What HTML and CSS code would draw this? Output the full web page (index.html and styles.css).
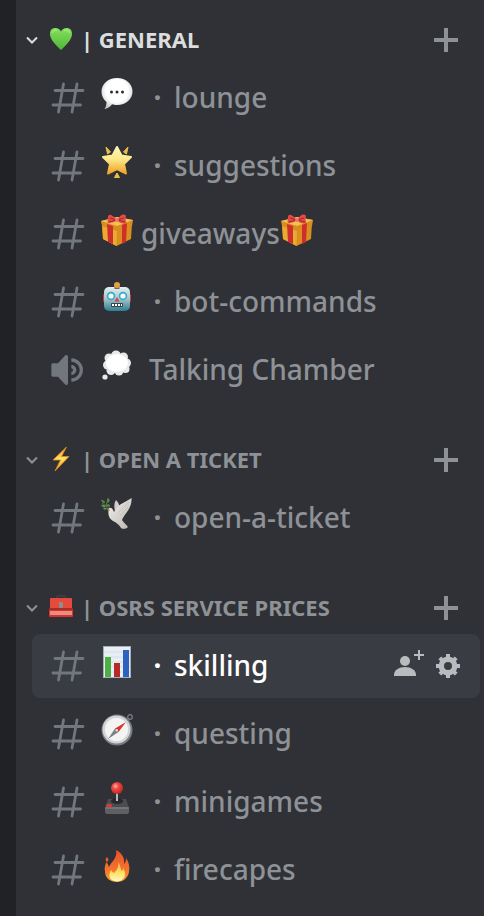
FILE: index.html
```html
<!DOCTYPE html>
<html lang="en">
<head>
<meta charset="utf-8">
<meta name="viewport" content="width=device-width, initial-scale=1">
<title>Channels</title>
<link rel="stylesheet" href="styles.css">
</head>
<body>
<svg class="defs" aria-hidden="true">
  <defs>
    <linearGradient id="gGreen" x1="0" y1="0" x2="0" y2="1"><stop offset="0" stop-color="#86e05e"/><stop offset="1" stop-color="#4fb535"/></linearGradient>
    <radialGradient id="gWhite" cx=".5" cy=".42" r=".6"><stop offset=".6" stop-color="#fff"/><stop offset="1" stop-color="#c9c9cb"/></radialGradient>
    <linearGradient id="gStar" x1="0" y1="0" x2="0" y2="1"><stop offset="0" stop-color="#fff6b8"/><stop offset=".45" stop-color="#fde98a"/><stop offset="1" stop-color="#f0a125"/></linearGradient>
    <linearGradient id="gBot" x1="0" y1="0" x2="0" y2="1"><stop offset="0" stop-color="#e3f1f0"/><stop offset=".5" stop-color="#a3c4c8"/><stop offset="1" stop-color="#2f7d92"/></linearGradient>
    <linearGradient id="gBolt" x1="0" y1="0" x2="0" y2="1"><stop offset="0" stop-color="#f39a1f"/><stop offset=".5" stop-color="#ffe266"/><stop offset="1" stop-color="#f08c18"/></linearGradient>
    <linearGradient id="gFire" x1="0" y1="0" x2="0" y2="1"><stop offset="0" stop-color="#e8502a"/><stop offset=".6" stop-color="#f5742c"/><stop offset="1" stop-color="#f9a236"/></linearGradient>
    <linearGradient id="gFlame" x1="0" y1="0" x2="0" y2="1"><stop offset="0" stop-color="#fbb03f"/><stop offset=".6" stop-color="#fee56a"/><stop offset="1" stop-color="#fff9c9"/></linearGradient>
    <linearGradient id="gDove" x1="0" y1="0" x2="1" y2="1"><stop offset="0" stop-color="#f4f2ee"/><stop offset="1" stop-color="#b9b5ae"/></linearGradient>
    <radialGradient id="gBall" cx=".38" cy=".35" r=".65"><stop offset="0" stop-color="#ffaaa2"/><stop offset=".4" stop-color="#ec4b45"/><stop offset="1" stop-color="#c52622"/></radialGradient>
    <symbol id="hash" viewBox="0 0 40 40"><path d="M7 12.500H35M5 27H32.500M15.500 6L10.500 34M29 6L24 34" fill="none" stroke="currentColor" stroke-width="2.800" stroke-linecap="round"/></symbol>
    <symbol id="chevron" viewBox="0 0 12 12"><path d="M1 3.500L6 8.500L11 3.500" fill="none" stroke="currentColor" stroke-width="2"/></symbol>
    <symbol id="plus" viewBox="0 0 24 24"><path d="M12 0V24M0 12H24" stroke="currentColor" stroke-width="4"/></symbol>
    <symbol id="gift" viewBox="-1 -1 34 34">
      <path d="M1 10L16 16L31 9L30 25L15.500 32L2 25Z" fill="#d98f1f"/>
      <path d="M1 10L16 16L15.500 32L2 25Z" fill="#e9a933"/>
      <path d="M0 7L16 3L32 6L31 12L16 17L1 12Z" fill="#d98d20"/>
      <path d="M0 7L16 3L32 6L16 12Z" fill="#f2c050"/>
      <path d="M6 10L12 12V30L7 28ZM21 11L26 9L25 28L21 30Z" fill="#cf2e2b"/>
      <path d="M16 6C10 -1 7 0 7 3C7 6 6 8 7 9C11 9 14 8 16 6C18 9 22 10 25 9C25 6 24 4 25 2C23 -1 19 1 16 6Z" fill="#e34b48"/>
      <path d="M9 4L16 6L23 4M8 8L16 6L24 8" stroke="#a92427" fill="none"/>
      <circle cx="16" cy="6" r="2" fill="#f0716b"/>
    </symbol>
  </defs>
</svg>

<nav class="sidebar" aria-label="Channels">
  <section class="category unread">
    <header class="category-head">
      <button class="toggle" type="button" aria-expanded="true">
        <svg class="chevron" aria-hidden="true"><use href="#chevron"/></svg>
        <svg class="emoji-small" viewBox="0 0 24 24" aria-hidden="true"><path d="M12 23C8 19 1 13 1 7C1 3 3 1 6.500 1C9 1 11 2.500 12 4.500C13 2.500 15 1 17.500 1C21 1 23 3 23 7C23 13 16 19 12 23Z" fill="url(#gGreen)"/><path d="M3.500 6C4 3.500 6 3 8 3.500M15 3.500C18 2.500 20 4 20.500 6" stroke="#b1f08f" stroke-width="1.500" fill="none" opacity=".6"/></svg>
        <span class="title">| GENERAL</span>
      </button>
      <button class="add" type="button" aria-label="Create channel"><svg aria-hidden="true"><use href="#plus"/></svg></button>
    </header>
    <ul class="channels">
      <li class="channel"><a href="#lounge">
        <svg class="kind" aria-hidden="true"><use href="#hash"/></svg>
        <svg class="emoji" viewBox="-1 -1 34 34" aria-hidden="true"><path d="M16 0C25 0 31.500 6 31.500 13.500C31.500 21 25 27 16 27C14 27 12.500 26.700 11 26.300C9 29 6 31 3.500 31C5 29 5.500 26.500 5.500 24C2.500 21.500 .5 18 .5 13.500C.5 6 7 0 16 0Z" fill="url(#gWhite)"/><circle cx="10.500" cy="14" r="1.500" fill="#2c2c2e"/><circle cx="16" cy="14" r="1.500" fill="#2c2c2e"/><circle cx="21.500" cy="14" r="1.500" fill="#2c2c2e"/></svg>
        <span class="dot">·</span><span class="name">lounge</span></a></li>
      <li class="channel"><a href="#suggestions">
        <svg class="kind" aria-hidden="true"><use href="#hash"/></svg>
        <svg class="emoji" viewBox="-1 -1 34 34" aria-hidden="true"><path d="M16 1L20.500 9.500L30 11L23 18L25 27.500L16 23L7 27.500L9 18L2 11L11.500 9.500Z" fill="url(#gStar)" stroke="url(#gStar)" stroke-width="2" stroke-linejoin="round"/><path d="M5 1L9.500 6L6.500 8ZM27 1L22.500 6L25.500 8ZM16 27L18.500 31.500H13.500Z" fill="#eebd4c" stroke="#eebd4c" stroke-linejoin="round"/></svg>
        <span class="dot">·</span><span class="name">suggestions</span></a></li>
      <li class="channel"><a href="#giveaways">
        <svg class="kind" aria-hidden="true"><use href="#hash"/></svg>
        <svg class="emoji" aria-hidden="true"><use href="#gift"/></svg>
        <span class="name">giveaways</span><svg class="emoji trailing" aria-hidden="true"><use href="#gift"/></svg></a></li>
      <li class="channel"><a href="#bot-commands">
        <svg class="kind" aria-hidden="true"><use href="#hash"/></svg>
        <svg class="emoji" viewBox="-1 -1 34 34" aria-hidden="true"><rect x="2" y="12" width="3" height="8" rx="1" fill="#b9413c"/><rect x="27" y="12" width="3" height="8" rx="1" fill="#b9413c"/><rect x="3" y="5" width="26" height="24" rx="5" fill="url(#gBot)"/><rect x="13.500" y="4" width="5" height="3" fill="#7b5a77"/><circle cx="16" cy="3" r="3" fill="#e6a13e"/><circle cx="10" cy="14" r="4.200" fill="#37a8c9"/><circle cx="22" cy="14" r="4.200" fill="#37a8c9"/><circle cx="10" cy="14" r="2.600" fill="#f3feff"/><circle cx="22" cy="14" r="2.600" fill="#f3feff"/><path d="M16 15L18.500 19.500H13.500Z" fill="#d4473f"/><rect x="10" y="21" width="12" height="4" rx="1" fill="#35474d"/><path d="M11 23H21" stroke="#fff" stroke-width="2" stroke-dasharray="2 1"/></svg>
        <span class="dot">·</span><span class="name">bot-commands</span></a></li>
      <li class="channel"><a href="#talking-chamber">
        <svg class="kind" viewBox="0 0 24 24" aria-hidden="true"><path fill="currentColor" d="M11.383 3.079C11.009 2.925 10.579 3.010 10.293 3.296L6 8.002H3C2.450 8.002 2 8.453 2 9.002V15.002C2 15.552 2.450 16.002 3 16.002H6L10.293 20.710C10.579 20.996 11.009 21.082 11.383 20.927C11.757 20.772 12 20.407 12 20.002V4.002C12 3.599 11.757 3.232 11.383 3.079ZM14 5.002V7.002C16.757 7.002 19 9.246 19 12.002C19 14.759 16.757 17.002 14 17.002V19.002C17.860 19.002 21 15.863 21 12.002C21 8.143 17.860 5.002 14 5.002ZM14 9.002C15.654 9.002 17 10.349 17 12.002C17 13.657 15.654 15.002 14 15.002V13.002C14.551 13.002 15 12.553 15 12.002C15 11.451 14.551 11.002 14 11.002V9.002Z"/></svg>
        <svg class="emoji" viewBox="-1 -1 34 34" aria-hidden="true"><g fill="#e9e9eb"><circle cx="8" cy="8" r="4.500"/><circle cx="15" cy="5.500" r="5"/><circle cx="22.500" cy="7" r="4.500"/><circle cx="25.500" cy="13" r="4.500"/><circle cx="24.500" cy="19" r="4"/><circle cx="18" cy="21" r="4.500"/><circle cx="10" cy="20.500" r="4.500"/><circle cx="6.500" cy="15" r="4.500"/><circle cx="4" cy="27" r="2.600"/></g><ellipse cx="16" cy="13" rx="11" ry="9" fill="#fff"/></svg>
        <span class="name voice">Talking Chamber</span></a></li>
    </ul>
  </section>

  <section class="category">
    <header class="category-head">
      <button class="toggle" type="button" aria-expanded="true">
        <svg class="chevron" aria-hidden="true"><use href="#chevron"/></svg>
        <svg class="emoji-small" viewBox="0 0 24 24" aria-hidden="true"><path d="M17.500 0L4 13H11.500L6 24L20 9.500H12.500Z" fill="url(#gBolt)" stroke="#e88a1a" stroke-width=".8"/></svg>
        <span class="title">| OPEN A TICKET</span>
      </button>
      <button class="add" type="button" aria-label="Create channel"><svg aria-hidden="true"><use href="#plus"/></svg></button>
    </header>
    <ul class="channels">
      <li class="channel"><a href="#open-a-ticket">
        <svg class="kind" aria-hidden="true"><use href="#hash"/></svg>
        <svg class="emoji" viewBox="-1 -1 34 34" aria-hidden="true"><path d="M14 13C13 9 13 5 15 2C18 5 19 8 19 12Z" fill="#d0cdc8"/><path d="M8 10C10 9 12 11 13 14C15 10 18 7 22 5C25 3 28 2 30.500 0C31 5 29 10 26 14C24 17 22 19 21 22C22 24 25 26 27 29C25 31 22 31.500 20 30C19 28 17 26 14 24C9 22 6 18 8 10Z" fill="url(#gDove)"/><path d="M17 15L28 4M19 18L27 9" stroke="#c4c0b8" stroke-width=".8"/><path d="M8 10L6 12L9 13Z" fill="#b48b74"/><path d="M7 12L5 7L7 2M5 8L1 5" stroke="#577d45" fill="none"/><path d="M7 0Q10 2 7 5Q5 2 7 0ZM0 2Q4 2 4 5Q1 5 0 2ZM0 7Q4 6 5 9Q1 10 0 7ZM5 7Q9 5 9 8Q7 10 5 7ZM2 10Q5 9 6 11Q3 13 2 10Z" fill="#628d4b"/></svg>
        <span class="dot">·</span><span class="name">open-a-ticket</span></a></li>
    </ul>
  </section>

  <section class="category">
    <header class="category-head">
      <button class="toggle" type="button" aria-expanded="true">
        <svg class="chevron" aria-hidden="true"><use href="#chevron"/></svg>
        <svg class="emoji-small" viewBox="0 0 24 24" aria-hidden="true"><path d="M7 4L8.500 1H15.500L17 4" fill="none" stroke="#454044" stroke-width="1.500"/><rect x="1" y="3" width="22" height="12" rx="1" fill="#e54a3c"/><rect y="13" width="24" height="9" rx="1" fill="#d93427"/><path d="M0 14H24" stroke="#772521"/><path d="M1 17H23M1 19H23" stroke="#f7e6e1"/><rect x="10" y="7" width="4" height="6" rx="1" fill="#8f8c8d"/></svg>
        <span class="title">| OSRS SERVICE PRICES</span>
      </button>
      <button class="add" type="button" aria-label="Create channel"><svg aria-hidden="true"><use href="#plus"/></svg></button>
    </header>
    <ul class="channels">
      <li class="channel active"><a href="#skilling" aria-current="page">
        <svg class="kind" aria-hidden="true"><use href="#hash"/></svg>
        <svg class="emoji" viewBox="-1 -1 34 34" aria-hidden="true"><rect x="2" width="28" height="32" fill="#a6adbd"/><rect x="3" y="1" width="26" height="30" fill="#e8edf6"/><path d="M3 6H29M3 11H29M3 16H29M3 21H29M3 26H29" stroke="#d5dce9"/><rect x="4" y="11" width="6" height="20" fill="#4eaf42"/><rect x="13" y="17" width="6" height="14" fill="#b42a24"/><rect x="22" y="4" width="6" height="27" fill="#2a62bd"/></svg>
        <span class="dot">·</span><span class="name">skilling</span></a>
        <div class="actions">
          <button type="button" aria-label="Create invite"><svg viewBox="0 0 32 32" aria-hidden="true"><circle cx="13" cy="11" r="5" fill="currentColor"/><path d="M2 26V25C2 20 7 17 13 17S24 20 24 25V26Z" fill="currentColor"/><path d="M27 0V10M22 5H32" stroke="currentColor" stroke-width="2"/></svg></button>
          <button type="button" aria-label="Edit channel"><svg viewBox="0 0 16 16" aria-hidden="true"><g fill="none" stroke="currentColor"><circle cx="8" cy="8" r="3.350" stroke-width="2.700"/><path d="M8 2V4M8 12V14M2 8H4M12 8H14M3.900 3.900L5.300 5.300M10.700 10.700L12.100 12.100M12.100 3.900L10.700 5.300M5.300 10.700L3.900 12.100" stroke-width="2"/></g></svg></button>
        </div></li>
      <li class="channel"><a href="#questing">
        <svg class="kind" aria-hidden="true"><use href="#hash"/></svg>
        <svg class="emoji" viewBox="-1 -1 34 34" aria-hidden="true"><circle cx="29" cy="3" r="2.300" fill="none" stroke="#7c8288" stroke-width="1.200"/><circle cx="16" cy="16" r="15.500" fill="#777d83"/><circle cx="15.500" cy="15.500" r="14" fill="#d2d5d7"/><circle cx="15.500" cy="15.500" r="11.500" fill="#f4f4f3"/><path d="M25 8L17.500 18L14 14.500Z" fill="#d8342f"/><path d="M7 25L14 14.500L17.500 18Z" fill="#7d8186"/><circle cx="15.800" cy="16.200" r="1.200" fill="#ddd"/></svg>
        <span class="dot">·</span><span class="name">questing</span></a></li>
      <li class="channel"><a href="#minigames">
        <svg class="kind" aria-hidden="true"><use href="#hash"/></svg>
        <svg class="emoji" viewBox="-1 -1 34 34" aria-hidden="true"><path d="M7 17H25L28 26H4Z" fill="#4b4c50"/><rect x="4" y="25" width="24" height="7" rx="2" fill="#5f6064"/><path d="M4 26H28" stroke="#85868a"/><ellipse cx="16" cy="19" rx="6" ry="3" fill="#27282b"/><path d="M16 10V19" stroke="#b7b8bb" stroke-width="2"/><circle cx="16" cy="6" r="6" fill="url(#gBall)"/><ellipse cx="8" cy="23.500" rx="3" ry="1.800" fill="#d83c38"/></svg>
        <span class="dot">·</span><span class="name">minigames</span></a></li>
      <li class="channel"><a href="#firecapes">
        <svg class="kind" aria-hidden="true"><use href="#hash"/></svg>
        <svg class="emoji" viewBox="-1 -1 34 34" aria-hidden="true"><path d="M15 0C21 3 24 8 23 14C25 12 25 10 25 8C28 12 29 17 28 22C27 28 22 32 16 32C9 32 4 28 4 21C3 17 5 14 5 12C7 13 7 15 8 17C10 12 17 8 15 0Z" fill="url(#gFire)"/><path d="M6 7Q9 10 6 12Q3 10 6 7Z" fill="#e65b2d"/><path d="M17 12C20 15 19 19 21 21C22 20 22 19 22 18C26 24 24 31 16 31.500C8 31 7 25 10 20C11 22 12 22 13 23C16 20 18 17 17 12Z" fill="url(#gFlame)"/></svg>
        <span class="dot">·</span><span class="name">firecapes</span></a></li>
    </ul>
  </section>
</nav>
</body>
</html>
```
FILE: styles.css
```css
* {
  box-sizing: border-box;
}

body {
  margin: 0;
  min-height: 100vh;
  background: #2f3136;
  border-left: 16px solid #202225;
  color: #8e9297;
  font-family: "Noto Sans", "Open Sans", sans-serif;
}

button {
  padding: 0;
  border: 0;
  background: none;
  color: inherit;
  font: inherit;
  cursor: pointer;
}

svg {
  display: block;
  flex: none;
}

.defs {
  position: absolute;
  width: 0;
  height: 0;
}

.sidebar {
  display: flex;
  flex-direction: column;
  gap: 32px;
  padding: 14px 4px 14px 0;
}

.category-head {
  display: flex;
  align-items: center;
  justify-content: space-between;
  height: 52px;
  padding: 0 22px 0 10px;
}

.toggle {
  display: flex;
  align-items: center;
  font-size: 22px;
  font-weight: 700;
  line-height: 28px;
  white-space: nowrap;
}

.unread .toggle {
  color: #dcddde;
}

.chevron {
  width: 12px;
  height: 12px;
  margin-right: 11px;
}

.emoji-small {
  width: 24px;
  height: 24px;
  margin: 0 8px 2px 0;
}

.title,
.name,
.dot {
  padding-bottom: 2px;
}

.add svg {
  width: 24px;
  height: 24px;
}

.channels {
  display: flex;
  flex-direction: column;
  gap: 4px;
  margin: 0 0 0 16px;
  padding: 0;
  list-style: none;
}

.channel {
  display: flex;
  align-items: center;
  height: 64px;
  padding: 0 16px;
  border-radius: 8px;
}

.channel a {
  display: flex;
  flex: 1;
  align-items: center;
  color: inherit;
  text-decoration: none;
  font-size: 28px;
  font-weight: 500;
  line-height: 40px;
  white-space: nowrap;
}

.active {
  background: #393c43;
}

.channel.active a {
  color: #fff;
}

.kind {
  width: 40px;
  height: 40px;
  margin-right: 12px;
  color: #72767d;
}

.emoji {
  width: 34px;
  height: 34px;
  margin: 0 7px 8px 0;
}

.emoji.trailing {
  margin-right: 0;
}

.dot {
  width: 33px;
  font-weight: 700;
  text-align: center;
}

.voice {
  margin-left: 8px;
}

.actions {
  display: flex;
  gap: 8px;
  color: #b9bbbe;
}

.actions svg {
  width: 32px;
  height: 32px;
}
```
